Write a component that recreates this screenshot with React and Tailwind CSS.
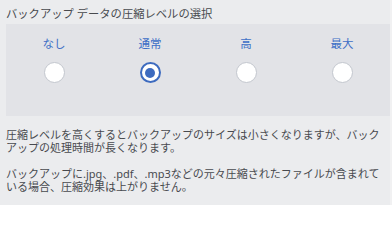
import React, { useState } from "react";

const levels = ["なし", "通常", "高", "最大"];

const App = () => {
  const [level, setLevel] = useState(1);

  return (
    <div
      className="flex w-[392px] h-[205px] bg-[#ebecee] text-[#484a4e]"
      style={{ fontFamily: '"Noto Sans", "Noto Sans CJK JP", sans-serif' }}
    >
      <div className="w-[390px] pl-[6px] pt-[6px]">
        <div className="text-[11.3px] leading-[16px] mb-[2px]">
          バックアップ データの圧縮レベルの選択
        </div>
        <div className="grid grid-cols-4 h-[92px] bg-[#e2e3e7]">
          {levels.map((label, i) => (
            <button
              key={label}
              onClick={() => setLevel(i)}
              className="flex flex-col items-center pt-[12px]"
            >
              <span className="text-[11.5px] leading-[16px] text-[#3d6fc6]">
                {label}
              </span>
              {level === i ? (
                <span className="mt-[10px] flex items-center justify-center w-[21px] h-[21px] rounded-full border-2 border-[#3d6bbf] bg-white">
                  <span className="w-[10px] h-[10px] rounded-full bg-[#3d6bbf]" />
                </span>
              ) : (
                <span className="mt-[10px] w-[21px] h-[21px] rounded-full border-[1.5px] border-[#c3c7ce] bg-white" />
              )}
            </button>
          ))}
        </div>
        <div className="mt-[12px] pr-[4px] text-[11px] leading-[13px]">
          <p>
            圧縮レベルを高くするとバックアップのサイズは小さくなりますが、バックアップの処理時間が長くなります。
          </p>
          <p className="mt-[13px]">
            バックアップに.jpg、.pdf、.mp3などの元々圧縮されたファイルが含まれている場合、圧縮効果は上がりません。
          </p>
        </div>
      </div>
      <div className="w-[2px] bg-[#f1f1f2]" />
    </div>
  );
};

export default App;
